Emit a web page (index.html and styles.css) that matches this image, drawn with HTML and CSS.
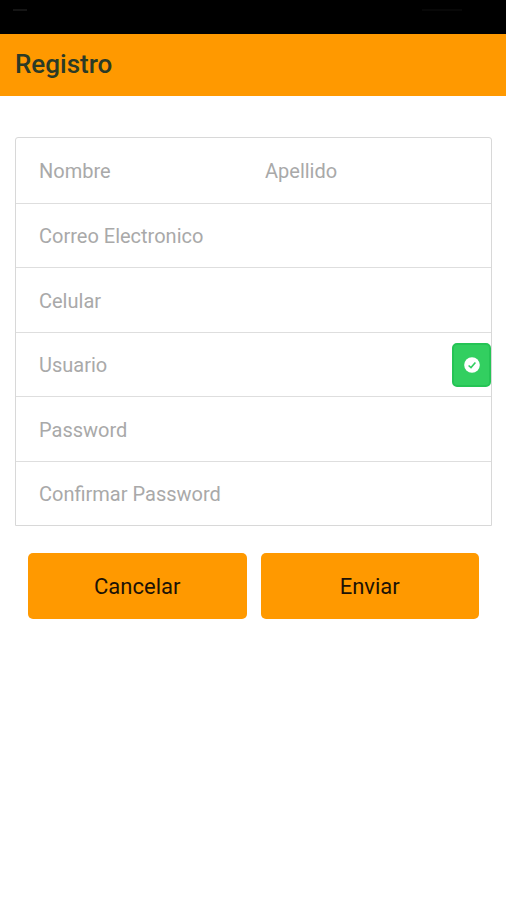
FILE: index.html
```
<!DOCTYPE html>
<html lang="es">

<head>
    <meta charset="UTF-8">
    <meta name="viewport" content="width=device-width, initial-scale=1">
    <title>Registro</title>
    <link rel="stylesheet" href="styles.css">
</head>

<body>
    <div class="status-bar">
        <span class="status-mark"></span>
        <span class="status-mark status-mark-right"></span>
    </div>
    <header class="toolbar">
        <h1>Registro</h1>
    </header>
    <main class="content">
        <form>
            <div class="fields">
                <div class="row">
                    <input type="text" name="nombre" placeholder="Nombre" aria-label="Nombre">
                    <input type="text" name="apellido" placeholder="Apellido" aria-label="Apellido">
                </div>
                <div class="row">
                    <input type="email" name="correo" placeholder="Correo Electronico" aria-label="Correo Electronico">
                </div>
                <div class="row">
                    <input type="tel" name="celular" placeholder="Celular" aria-label="Celular">
                </div>
                <div class="row">
                    <input type="text" name="usuario" placeholder="Usuario" aria-label="Usuario">
                    <button type="button" class="check" aria-label="Verificar usuario">
                        <svg viewBox="0 0 16 16" width="16" height="16">
                            <circle cx="8" cy="8" r="7.8" fill="#fff" />
                            <path d="M4.6 8.5 L7 10.6 L11.4 5.4" fill="none" stroke="#32cf60" stroke-width="1.6" />
                        </svg>
                    </button>
                </div>
                <div class="row">
                    <input type="password" name="password" placeholder="Password" aria-label="Password">
                </div>
                <div class="row">
                    <input type="password" name="confirmar" placeholder="Confirmar Password" aria-label="Confirmar Password">
                </div>
            </div>
            <div class="actions">
                <button type="button" class="btn">Cancelar</button>
                <button type="submit" class="btn">Enviar</button>
            </div>
        </form>
    </main>
</body>

</html>
```
FILE: styles.css
```
* {
    box-sizing: border-box;
}

body {
    margin: 0;
    background: #fff;
    font-family: Roboto, "Liberation Sans", sans-serif;
}

.status-bar {
    display: flex;
    justify-content: space-between;
    height: 34px;
    padding: 9px 44px 0 13px;
    background: #000;
}

.status-mark {
    width: 14px;
    height: 2px;
    background: #151515;
}

.status-mark-right {
    width: 40px;
    background: #080808;
}

.toolbar {
    display: flex;
    align-items: center;
    height: 62px;
    padding: 0 15px 2px;
    background: #ff9900;
}

.toolbar h1 {
    margin: 0;
    font-size: 26px;
    font-weight: 500;
    color: #2b3a26;
}

.content {
    padding: 41px 14px 0 15px;
}

.fields {
    display: grid;
    grid-template-columns: minmax(0, 1fr);
    grid-auto-rows: 1fr;
    min-height: 389px;
    border: 1px solid #d8d8d8;
    border-radius: 3px 3px 0 0;
}

.row {
    display: flex;
    align-items: center;
}

.row + .row {
    border-top: 1px solid #dedede;
}

.row input {
    flex: 1;
    min-width: 0;
    height: 62px;
    padding: 2px 0 0 23px;
    border: 0;
    outline: 0;
    background: transparent;
    font-family: inherit;
    font-size: 20px;
    color: #333;
}

.row input + input {
    padding-left: 0;
}

.row input::placeholder {
    color: #a9a9a9;
    opacity: 1;
}

.check {
    display: flex;
    align-items: center;
    justify-content: center;
    width: 39px;
    height: 44px;
    margin-top: 2px;
    padding: 0;
    border: 2px solid #25c455;
    border-radius: 5px;
    background: #32cf60;
}

.actions {
    display: flex;
    gap: 14px;
    padding: 27px 13px;
}

.btn {
    flex: 1;
    height: 66px;
    padding: 0;
    border: 0;
    border-radius: 5px;
    background: #ff9900;
    font-family: inherit;
    font-size: 22px;
    color: #1c1206;
}
```
